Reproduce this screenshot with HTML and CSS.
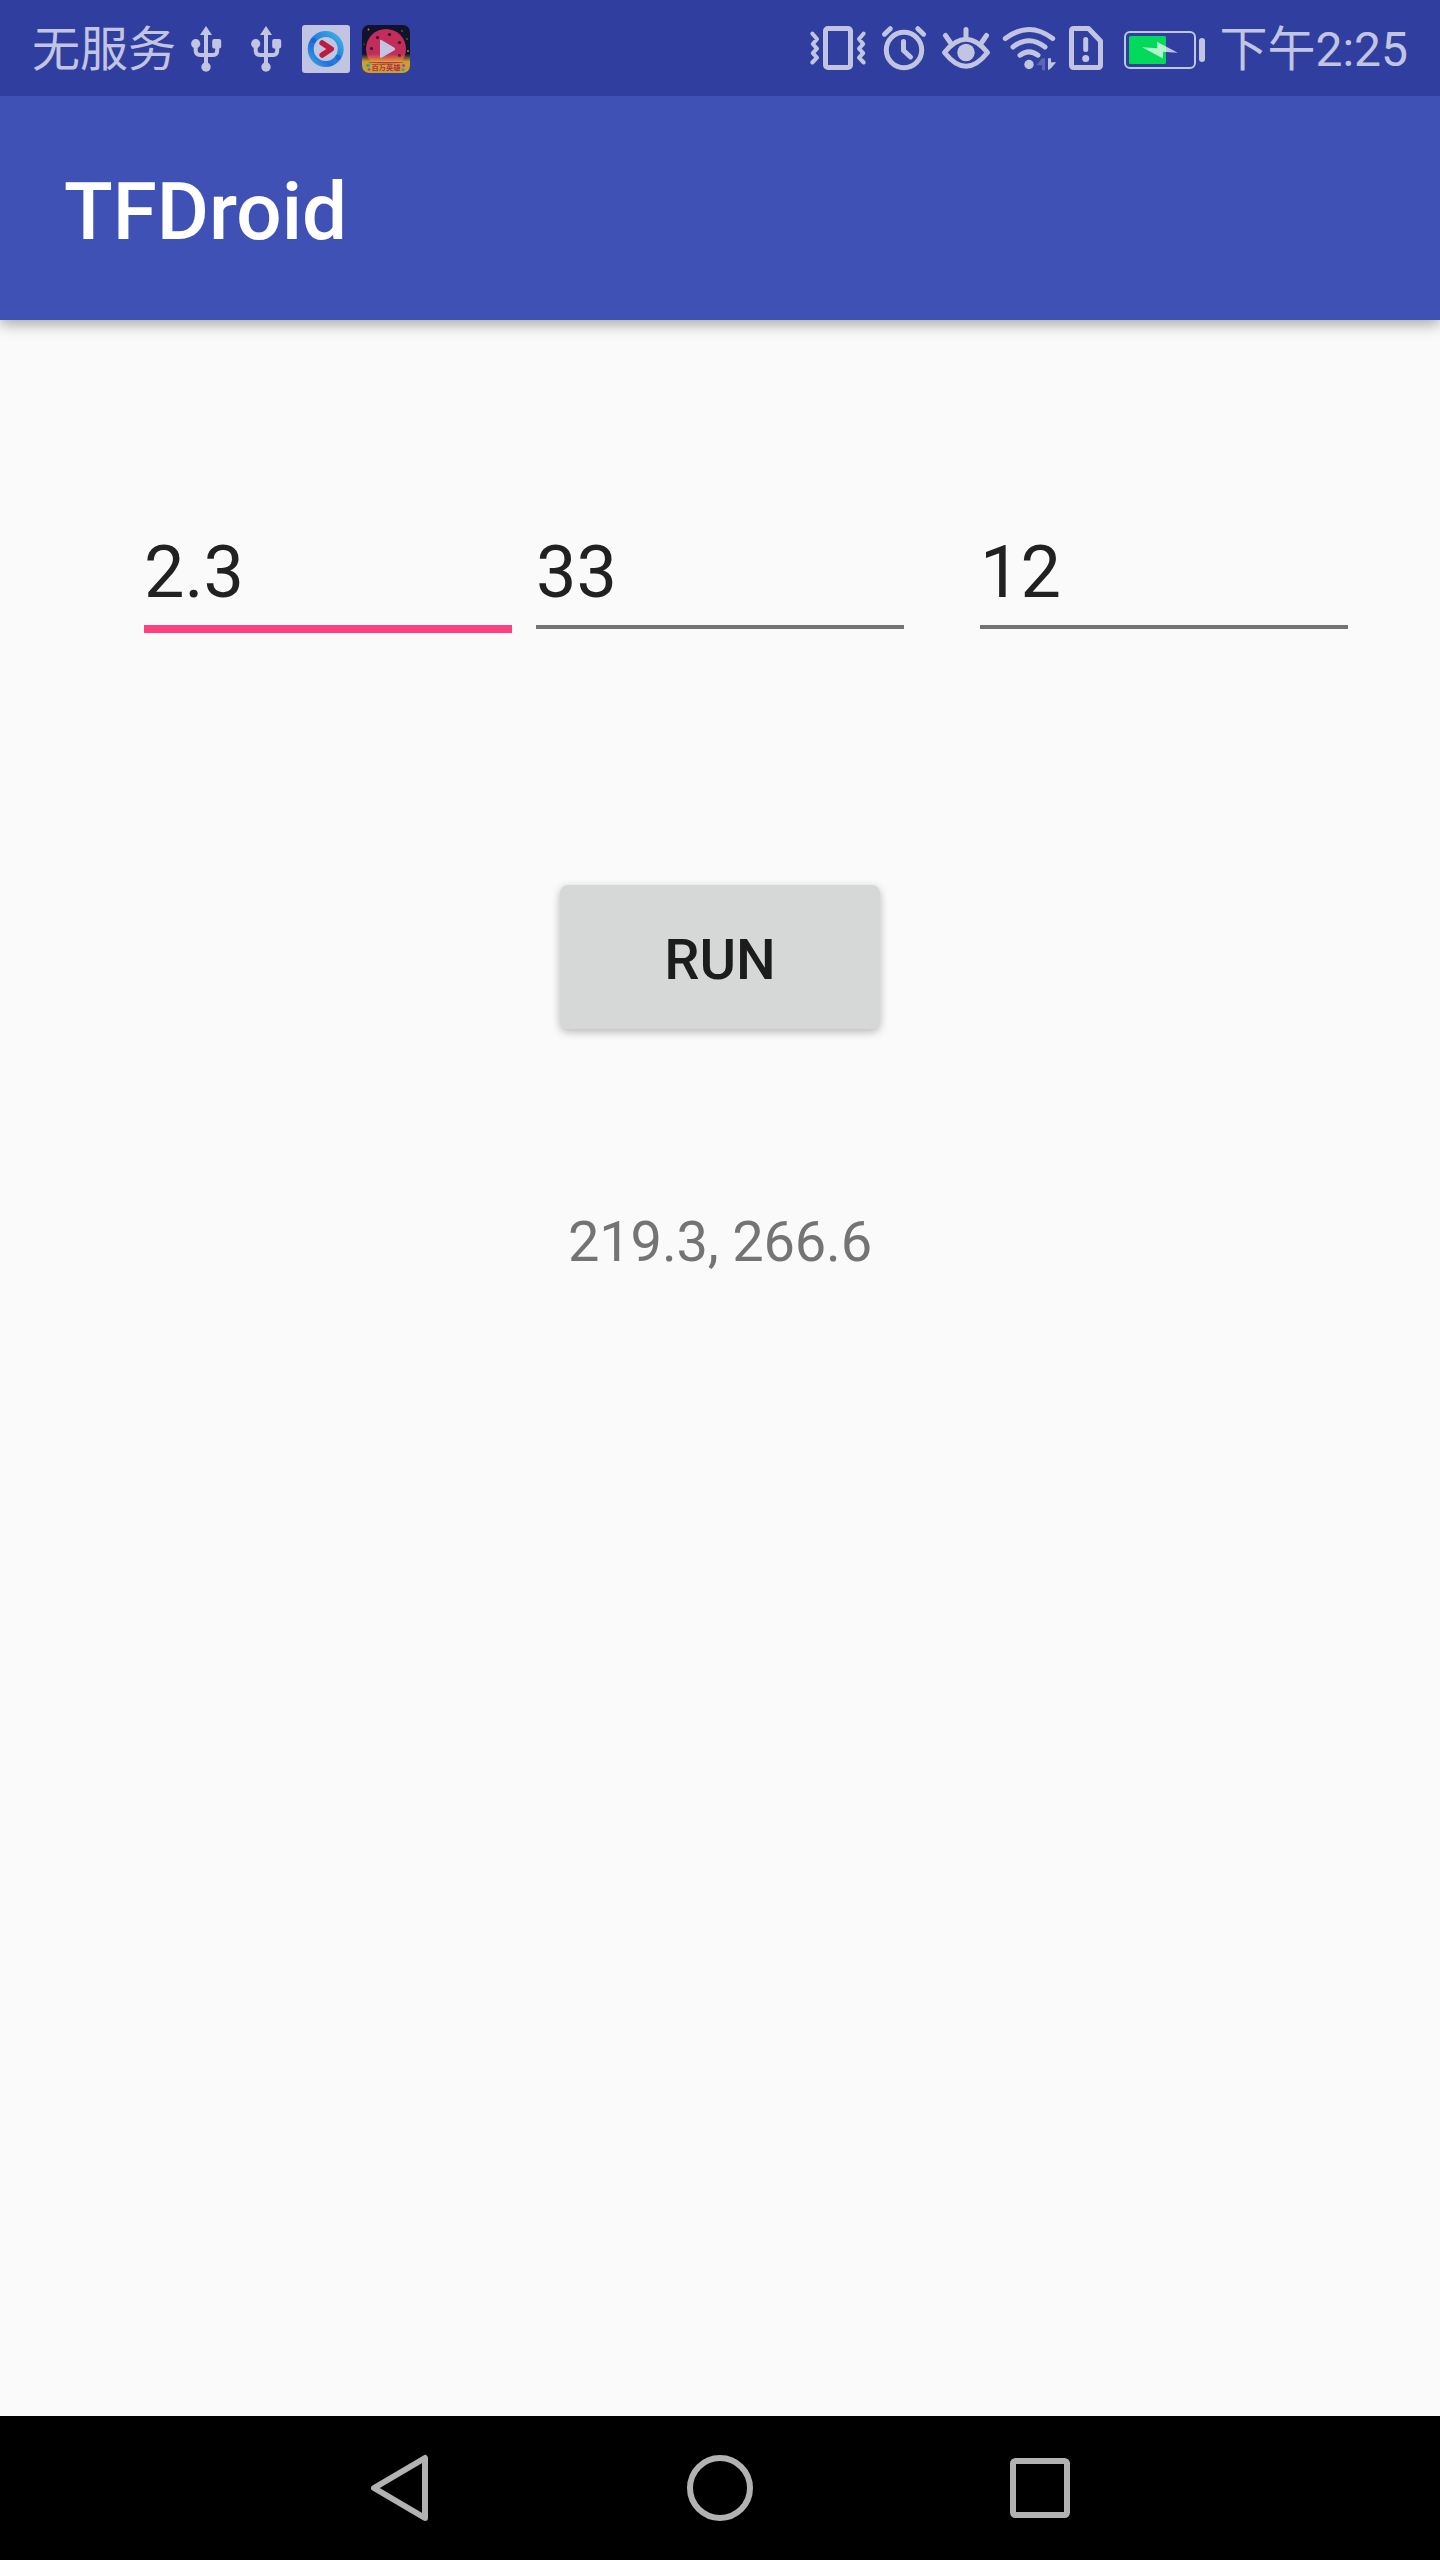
FILE: index.html
```html
<!DOCTYPE html>
<html lang="zh-CN">
<head>
<meta charset="utf-8">
<title>TFDroid</title>
<link rel="stylesheet" href="styles.css">
</head>
<body>
<div class="screen">
  <header class="status-bar">
    <div class="status-left">
      <span class="carrier">无服务</span>
      <svg class="icon" width="32" height="48" viewBox="190 25 32 48"><g id="usb"><path class="fill" d="M206 26l6 9h-12z"/><path class="line thin" d="M206 34v31M195.7 44v6.500q0 4.500 4.500 4.500h13q4 0 4-4.500v-6.500"/><circle class="fill" cx="206" cy="67" r="4.700"/><circle class="fill" cx="195.700" cy="43.700" r="4.600"/><rect class="fill" x="212.200" y="39" width="9" height="9.500" rx="2"/></g></svg>
      <svg class="icon usb-second" width="32" height="48" viewBox="190 25 32 48"><use href="#usb"/></svg>
      <svg class="icon app-video" width="48" height="48" viewBox="302 25 48 48">
        <defs><linearGradient id="ring" x1="0" y1="1" x2="1" y2="0"><stop offset="0" stop-color="#3ba4e0"/><stop offset=".3" stop-color="#2173dd"/><stop offset=".65" stop-color="#2b8be0"/><stop offset="1" stop-color="#42b4e2"/></linearGradient></defs>
        <rect class="fill" x="302" y="25" width="48" height="48" rx="3"/>
        <circle cx="325.700" cy="49" r="15" fill="none" stroke="url(#ring)" stroke-width="6"/>
        <circle cx="313.500" cy="40.500" r="2.700" fill="#1c66d8"/><circle cx="338" cy="57.500" r="2.700" fill="#1c66d8"/>
        <path d="M322.200 43l9 6-9 6" fill="none" stroke="#bd1c40" stroke-width="5.600" stroke-linecap="round" stroke-linejoin="round"/>
      </svg>
      <svg class="icon app-hero" width="48" height="48" viewBox="362 25 48 48">
        <defs><clipPath id="tile"><rect x="362" y="25" width="48" height="48" rx="7"/></clipPath><linearGradient id="glow" x1="0" y1="0" x2="0" y2="1"><stop offset="0" stop-color="#d99a3a" stop-opacity="0"/><stop offset="1" stop-color="#dda03a"/></linearGradient></defs>
        <g clip-path="url(#tile)">
          <path fill="#11132d" d="M362 25h48v48h-48z"/>
          <circle cx="386" cy="49" r="20" fill="#c22d5b"/>
          <g fill="#2a1230"><circle cx="389.500" cy="34.500" r="1.600"/><circle cx="377.500" cy="37.500" r="1.600"/><circle cx="399.500" cy="42.500" r="1.600"/><circle cx="371.500" cy="48.500" r="1.600"/><circle cx="399.500" cy="55.500" r="1.600"/></g>
          <g fill="#a79a35"><circle cx="368.500" cy="29.500" r=".9"/><circle cx="402" cy="31" r=".7"/><circle cx="407" cy="39" r=".7"/><circle cx="408" cy="51" r=".9"/><circle cx="364" cy="44" r=".6"/></g>
          <path fill="url(#glow)" d="M362 54h48v8h-48z"/>
          <path fill="#c9a12c" d="M362 61q24 5 48 0v12h-48z"/>
          <path class="fill" d="M380 41q0-2 1.500-1l13 7.700q1.500 1.300 0 2.500l-13 7.500q-1.500.8-1.500-1z"/>
          <circle cx="368" cy="65.500" r="1.800" fill="#28a5a6"/><circle cx="369" cy="69.500" r="1.300" fill="#c236a0"/><circle cx="403.500" cy="65.500" r="1.600" fill="#c236a0"/><circle cx="403" cy="69.500" r="1.500" fill="#28a5a6"/>
          <text class="hero-label" x="386" y="70.400" text-anchor="middle">百万英雄</text>
        </g>
      </svg>
    </div>
    <div class="status-right">
      <svg class="icon" width="400" height="48" viewBox="808 25 400 48">
        <g class="line">
          <rect x="825.500" y="28.500" width="25" height="39" rx="2.500"/>
          <path class="thin" d="M812.300 33.500l4.700 5.500-4.200 5 4.200 4.700-4.200 4.500 4.200 4.500-4.700 4.800M863.700 33.500l-4.700 5.500 4.200 5-4.200 4.700 4.200 4.500-4.200 4.500 4.700 4.800"/>
          <circle cx="904" cy="50" r="17.700"/>
          <path d="M903.500 41.500v9l7 6.500M884.500 34.200l5.800-5.500M917.800 28.700l5.800 5.500"/>
          <path d="M944.500 52.500Q966 26 987.500 52.500Q966 80 944.500 52.500zM966 29.500v8M945.500 35.500l4.500 6.500M986.500 35.500l-4.500 6.500"/>
          <path d="M1005.300 38.500Q1029 20.500 1052.700 38.500M1013 47Q1029 34.500 1045 47M1020 55.200Q1029 48.500 1038 55.200"/>
          <path d="M1074 28.500h14.500L1100.500 41v24q0 2.500-2.500 2.500h-24q-2.500 0-2.500-2.500v-34q0-2.500 2.500-2.500zM1085.700 39.500v10"/>
        </g>
        <g class="fill">
          <circle cx="966" cy="52.500" r="8.700"/><circle cx="1029" cy="64.500" r="4.700"/><circle cx="1085.700" cy="58.500" r="3.500"/>
          <path opacity=".3" d="M1036.500 65.300l5.500-7h3v12h-3v-5z"/><path d="M1048 58.300h3v4h5.200l-5.200 6-3 2z"/>
          <rect x="1199" y="38" width="6" height="24" rx="3"/>
        </g>
        <rect x="1125" y="32" width="70" height="36" rx="5" fill="none" stroke="#c1c5e2" stroke-width="2"/>
        <rect x="1129" y="36" width="37" height="28" rx="1.500" fill="#00d95a"/>
        <path fill="#fff" opacity=".7" d="M1142.200 47.300l15.200 1-.4-6.600 12.300 6.600 8.500 4.500-14.800-1v6.600z"/>
      </svg>
      <span class="clock">下午2:25</span>
    </div>
  </header>
  <div class="app-bar"><h1 class="title">TFDroid</h1></div>
  <main class="content">
    <div class="fields">
      <div class="field active">2.3</div>
      <div class="field">33</div>
      <div class="field last">12</div>
    </div>
    <button class="run">RUN</button>
    <p class="result">219.3, 266.6</p>
  </main>
  <nav class="nav-bar">
    <svg class="nav-icon" viewBox="-40 -40 80 80"><path d="M-26 0L25-30V30z"/></svg>
    <svg class="nav-icon" viewBox="-40 -40 80 80"><circle r="30"/></svg>
    <svg class="nav-icon" viewBox="-40 -40 80 80"><rect x="-27" y="-27" width="54" height="54" rx="2.500"/></svg>
  </nav>
</div>
</body>
</html>
```
FILE: styles.css
```css
* { box-sizing: border-box; }

body {
  margin: 0;
  font-family: Roboto, "Noto Sans CJK SC", sans-serif;
}

.screen {
  display: flex;
  flex-direction: column;
  width: 1440px;
  height: 2560px;
  overflow: hidden;
  background: #fafafa;
}

.status-bar {
  position: relative;
  z-index: 1;
  display: flex;
  flex: none;
  justify-content: space-between;
  height: 96px;
  padding: 0 32px;
  background: #303f9f;
  color: #c1c5e2;
  font-size: 48px;
  line-height: 100px;
  white-space: nowrap;
}

.status-left, .status-right { display: flex; }

.carrier { width: 144px; margin-right: 14px; }
.clock { margin-left: 11px; }

.icon { display: block; flex: none; margin-top: 25px; }
.usb-second { margin-left: 28px; }
.app-video { margin-left: 20px; }
.app-hero { margin-left: 12px; }

.fill { fill: #c1c5e2; }
.line {
  fill: none;
  stroke: #c1c5e2;
  stroke-width: 5;
  stroke-linecap: round;
  stroke-linejoin: round;
}
.thin { stroke-width: 4; }

.hero-label {
  fill: #b82b4c;
  font: 700 7.300px "Noto Sans CJK SC", sans-serif;
}

.app-bar {
  flex: none;
  height: 224px;
  padding-left: 64px;
  background: #3f51b5;
  box-shadow: 0 4px 14px rgba(0, 0, 0, .35);
}

.title {
  margin: 0;
  color: #fff;
  font-size: 80px;
  font-weight: 500;
  line-height: 232px;
}

.content {
  display: flex;
  flex: 1;
  flex-direction: column;
  align-items: center;
}

.fields {
  display: flex;
  gap: 24px;
  align-self: flex-start;
  margin: 205px 0 0 144px;
}

.field {
  width: 368px;
  height: 104px;
  border-bottom: 4px solid #747474;
  color: #212121;
  font-size: 72px;
  line-height: 95px;
}
.field.active { height: 108px; border-bottom: 8px solid #ff4081; }
.field.last { margin-left: 52px; }

.run {
  width: 320px;
  height: 144px;
  margin: 252px 0 0;
  padding: 6px 0 0;
  border: 0;
  border-radius: 8px;
  background: #d6d8d7;
  box-shadow: 0 3px 8px rgba(0, 0, 0, .27);
  color: #1c1c1c;
  font: 500 56px/66px Roboto, sans-serif;
}

.result {
  margin: 180px 0 0;
  color: #747474;
  font-size: 56px;
  line-height: 66px;
  letter-spacing: -.2px;
}

.nav-bar {
  display: flex;
  flex: none;
  align-items: center;
  justify-content: center;
  gap: 240px;
  height: 144px;
  background: #000;
}

.nav-icon {
  width: 80px;
  height: 80px;
  fill: none;
  stroke: #b2b2b2;
  stroke-width: 6;
  stroke-linejoin: round;
}
```
